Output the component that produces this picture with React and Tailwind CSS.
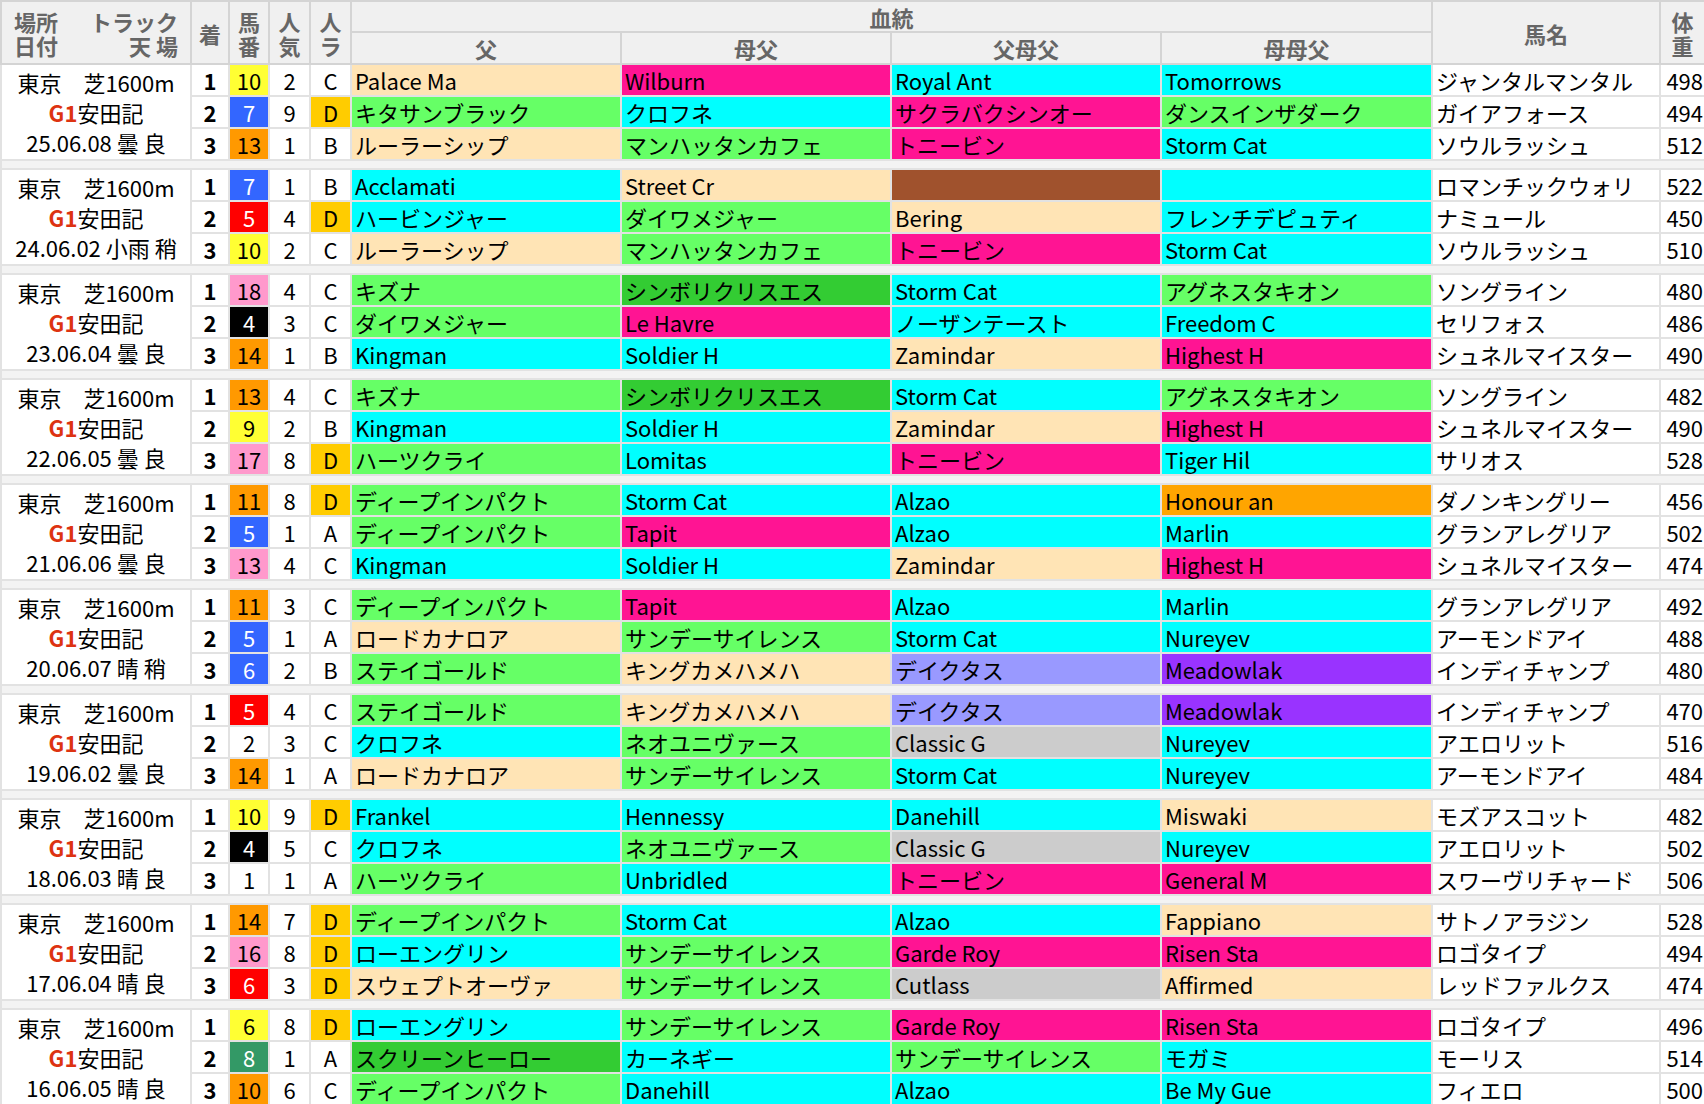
import React from 'react';

const GATE = {
  Y: 'bg-[#ffff33] text-black',
  B: 'bg-[#3366ff] text-white',
  R: 'bg-[#ff0000] text-white',
  K: 'bg-black text-white',
  O: 'bg-[#ff9900] text-black',
  P: 'bg-[#ff99cc] text-black',
  W: 'bg-white text-black',
  G: 'bg-[#339966] text-white',
};

const PED = {
  c: 'bg-[#00ffff]',
  g: 'bg-[#66ff66]',
  p: 'bg-[#ff1493]',
  m: 'bg-[#ffe4b5]',
  G: 'bg-[#33cc33]',
  b: 'bg-[#a0522d]',
  l: 'bg-[#9999ff]',
  v: 'bg-[#9933ff]',
  s: 'bg-[#cccccc]',
  o: 'bg-[#ffa500]',
};

const races = [
  ['25.06.08 曇 良', [
    [1, 10, 'Y', 2, 'C', ['Palace Ma', 'm'], ['Wilburn', 'p'], ['Royal Ant', 'c'], ['Tomorrows', 'c'], 'ジャンタルマンタル', 498],
    [2, 7, 'B', 9, 'D', ['キタサンブラック', 'g'], ['クロフネ', 'c'], ['サクラバクシンオー', 'p'], ['ダンスインザダーク', 'g'], 'ガイアフォース', 494],
    [3, 13, 'O', 1, 'B', ['ルーラーシップ', 'm'], ['マンハッタンカフェ', 'g'], ['トニービン', 'p'], ['Storm Cat', 'c'], 'ソウルラッシュ', 512],
  ]],
  ['24.06.02 小雨 稍', [
    [1, 7, 'B', 1, 'B', ['Acclamati', 'c'], ['Street Cr', 'm'], ['', 'b'], ['', 'c'], 'ロマンチックウォリ', 522],
    [2, 5, 'R', 4, 'D', ['ハービンジャー', 'c'], ['ダイワメジャー', 'g'], ['Bering', 'm'], ['フレンチデピュティ', 'c'], 'ナミュール', 450],
    [3, 10, 'Y', 2, 'C', ['ルーラーシップ', 'm'], ['マンハッタンカフェ', 'g'], ['トニービン', 'p'], ['Storm Cat', 'c'], 'ソウルラッシュ', 510],
  ]],
  ['23.06.04 曇 良', [
    [1, 18, 'P', 4, 'C', ['キズナ', 'g'], ['シンボリクリスエス', 'G'], ['Storm Cat', 'c'], ['アグネスタキオン', 'g'], 'ソングライン', 480],
    [2, 4, 'K', 3, 'C', ['ダイワメジャー', 'g'], ['Le Havre', 'p'], ['ノーザンテースト', 'c'], ['Freedom C', 'c'], 'セリフォス', 486],
    [3, 14, 'O', 1, 'B', ['Kingman', 'c'], ['Soldier H', 'c'], ['Zamindar', 'm'], ['Highest H', 'p'], 'シュネルマイスター', 490],
  ]],
  ['22.06.05 曇 良', [
    [1, 13, 'O', 4, 'C', ['キズナ', 'g'], ['シンボリクリスエス', 'G'], ['Storm Cat', 'c'], ['アグネスタキオン', 'g'], 'ソングライン', 482],
    [2, 9, 'Y', 2, 'B', ['Kingman', 'c'], ['Soldier H', 'c'], ['Zamindar', 'm'], ['Highest H', 'p'], 'シュネルマイスター', 490],
    [3, 17, 'P', 8, 'D', ['ハーツクライ', 'g'], ['Lomitas', 'c'], ['トニービン', 'p'], ['Tiger Hil', 'c'], 'サリオス', 528],
  ]],
  ['21.06.06 曇 良', [
    [1, 11, 'O', 8, 'D', ['ディープインパクト', 'g'], ['Storm Cat', 'c'], ['Alzao', 'c'], ['Honour an', 'o'], 'ダノンキングリー', 456],
    [2, 5, 'B', 1, 'A', ['ディープインパクト', 'g'], ['Tapit', 'p'], ['Alzao', 'c'], ['Marlin', 'c'], 'グランアレグリア', 502],
    [3, 13, 'P', 4, 'C', ['Kingman', 'c'], ['Soldier H', 'c'], ['Zamindar', 'm'], ['Highest H', 'p'], 'シュネルマイスター', 474],
  ]],
  ['20.06.07 晴 稍', [
    [1, 11, 'O', 3, 'C', ['ディープインパクト', 'g'], ['Tapit', 'p'], ['Alzao', 'c'], ['Marlin', 'c'], 'グランアレグリア', 492],
    [2, 5, 'B', 1, 'A', ['ロードカナロア', 'm'], ['サンデーサイレンス', 'g'], ['Storm Cat', 'c'], ['Nureyev', 'c'], 'アーモンドアイ', 488],
    [3, 6, 'B', 2, 'B', ['ステイゴールド', 'g'], ['キングカメハメハ', 'm'], ['デイクタス', 'l'], ['Meadowlak', 'v'], 'インディチャンプ', 480],
  ]],
  ['19.06.02 曇 良', [
    [1, 5, 'R', 4, 'C', ['ステイゴールド', 'g'], ['キングカメハメハ', 'm'], ['デイクタス', 'l'], ['Meadowlak', 'v'], 'インディチャンプ', 470],
    [2, 2, 'W', 3, 'C', ['クロフネ', 'c'], ['ネオユニヴァース', 'g'], ['Classic G', 's'], ['Nureyev', 'c'], 'アエロリット', 516],
    [3, 14, 'O', 1, 'A', ['ロードカナロア', 'm'], ['サンデーサイレンス', 'g'], ['Storm Cat', 'c'], ['Nureyev', 'c'], 'アーモンドアイ', 484],
  ]],
  ['18.06.03 晴 良', [
    [1, 10, 'Y', 9, 'D', ['Frankel', 'c'], ['Hennessy', 'c'], ['Danehill', 'c'], ['Miswaki', 'm'], 'モズアスコット', 482],
    [2, 4, 'K', 5, 'C', ['クロフネ', 'c'], ['ネオユニヴァース', 'g'], ['Classic G', 's'], ['Nureyev', 'c'], 'アエロリット', 502],
    [3, 1, 'W', 1, 'A', ['ハーツクライ', 'g'], ['Unbridled', 'c'], ['トニービン', 'p'], ['General M', 'p'], 'スワーヴリチャード', 506],
  ]],
  ['17.06.04 晴 良', [
    [1, 14, 'O', 7, 'D', ['ディープインパクト', 'g'], ['Storm Cat', 'c'], ['Alzao', 'c'], ['Fappiano', 'm'], 'サトノアラジン', 528],
    [2, 16, 'P', 8, 'D', ['ローエングリン', 'c'], ['サンデーサイレンス', 'g'], ['Garde Roy', 'p'], ['Risen Sta', 'p'], 'ロゴタイプ', 494],
    [3, 6, 'R', 3, 'D', ['スウェプトオーヴァ', 'm'], ['サンデーサイレンス', 'g'], ['Cutlass', 's'], ['Affirmed', 'm'], 'レッドファルクス', 474],
  ]],
  ['16.06.05 晴 良', [
    [1, 6, 'Y', 8, 'D', ['ローエングリン', 'c'], ['サンデーサイレンス', 'g'], ['Garde Roy', 'p'], ['Risen Sta', 'p'], 'ロゴタイプ', 496],
    [2, 8, 'G', 1, 'A', ['スクリーンヒーロー', 'G'], ['カーネギー', 'c'], ['サンデーサイレンス', 'g'], ['モガミ', 'c'], 'モーリス', 514],
    [3, 10, 'O', 6, 'C', ['ディープインパクト', 'g'], ['Danehill', 'c'], ['Alzao', 'c'], ['Be My Gue', 'c'], 'フィエロ', 500],
  ]],
];

const td = 'border-2 border-[#e2e2e2] h-[32px] p-0 leading-[30px] overflow-hidden whitespace-nowrap';
const th = 'border-2 border-[#d4d4d4] bg-[#f0f0f0] text-[#666] font-bold p-0 leading-[24px]';

export default function App() {
  return (
    <div className="w-[1704px] h-[1104px] bg-white overflow-hidden text-black text-[22px]" style={{ fontFamily: '"Noto Sans CJK JP", "Noto Sans", sans-serif' }}>
      <table className="table-fixed border-collapse border-2 border-[#333] w-[1704px]">
        <colgroup>
          <col className="w-[190px]" />
          <col className="w-[38px]" />
          <col className="w-[40px]" />
          <col className="w-[41px]" />
          <col className="w-[41px]" />
          <col className="w-[270px]" />
          <col className="w-[270px]" />
          <col className="w-[270px]" />
          <col className="w-[271px]" />
          <col className="w-[228px]" />
          <col className="w-[45px]" />
        </colgroup>
        <thead>
          <tr className="h-[31px]">
            <th rowSpan={2} className={th + ' px-3 text-left'}>
              <div className="flex justify-between"><span>場所</span><span>トラック</span></div>
              <div className="flex justify-between"><span>日付</span><span>天 場</span></div>
            </th>
            <th rowSpan={2} className={th}>着</th>
            <th rowSpan={2} className={th}>馬<br />番</th>
            <th rowSpan={2} className={th}>人<br />気</th>
            <th rowSpan={2} className={th}>人<br />ラ</th>
            <th colSpan={4} className={th}>血統</th>
            <th rowSpan={2} className={th}>馬名</th>
            <th rowSpan={2} className={th}>体<br />重</th>
          </tr>
          <tr className="h-[32px]">
            <th className={th}>父</th>
            <th className={th}>母父</th>
            <th className={th}>父母父</th>
            <th className={th}>母母父</th>
          </tr>
        </thead>
        <tbody>
          {races.map(([date, rows], gi) => (
            <React.Fragment key={date}>
              {gi > 0 && (
                <tr className="h-[9px]">
                  <td colSpan={11} className="bg-[#f3f3f3] border-2 border-[#e2e2e2] p-0 h-[9px]" />
                </tr>
              )}
              {rows.map((r, i) => (
                <tr key={i}>
                  {i === 0 && (
                    <td rowSpan={3} className="border-2 border-[#e2e2e2] p-0 text-center leading-[30px]">
                      <div>東京　芝1600m</div>
                      <div><span className="text-[#dd3311] font-bold">G1</span>安田記</div>
                      <div>{date}</div>
                    </td>
                  )}
                  <td className={td + ' text-center font-bold'}>{r[0]}</td>
                  <td className={td + ' text-center ' + GATE[r[2]]}>{r[1]}</td>
                  <td className={td + ' text-center'}>{r[3]}</td>
                  <td className={td + ' text-center ' + (r[4] === 'D' ? 'bg-[#ffcc00]' : '')}>{r[4]}</td>
                  {[r[5], r[6], r[7], r[8]].map(([name, c], k) => (
                    <td key={k} className={td + ' pl-[3px] ' + PED[c]}>{name}</td>
                  ))}
                  <td className={td + ' pl-[3px]'}>{r[9]}</td>
                  <td className={td + ' text-right pr-[1px]'}>{r[10]}</td>
                </tr>
              ))}
            </React.Fragment>
          ))}
        </tbody>
      </table>
    </div>
  );
}
